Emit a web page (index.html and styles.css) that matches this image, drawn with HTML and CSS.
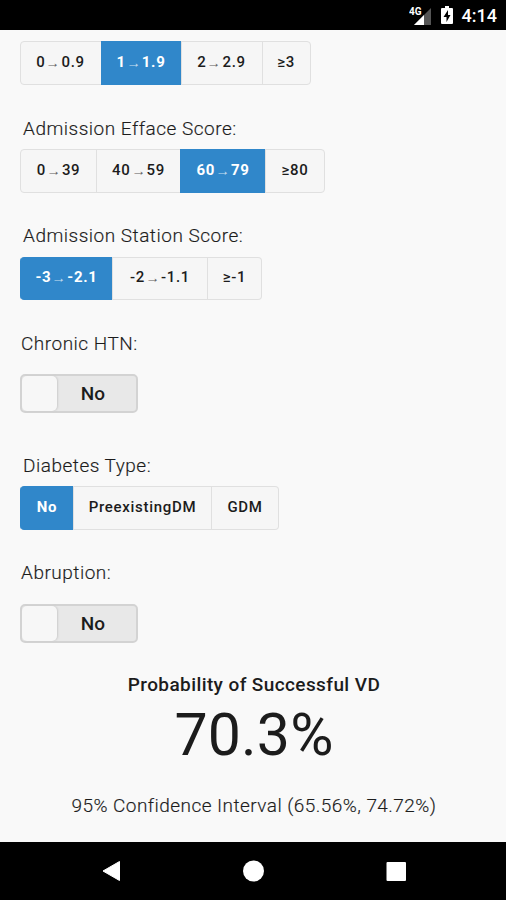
FILE: index.html
```html
<!DOCTYPE html>
<html lang="en"><head><meta charset="utf-8"><title>VD Calculator</title><link rel="stylesheet" href="styles.css"></head>
<body>
<header class="status">
<svg class="signal" width="24" height="22" viewBox="0 0 24 22"><path d="M22 3v17H5z" fill="#555"/><path d="M15 10v10H5z" fill="#fff"/><text x="0" y="10" class="net">4G</text></svg>
<svg class="battery" width="12" height="18" viewBox="0 0 12 18"><path d="M4 0h4v2h3q1 0 1 1v14q0 1-1 1H1q-1 0-1-1V3q0-1 1-1h3z" fill="#fff"/><path d="M7 4 2.500 11H5.500V16L9.500 9H7z" fill="#000"/></svg>
<span class="clock">4:14</span>
</header>
<main>
<div class="group g1"><span class="w80">0<i>→</i>0.9</span><span class="w80 on">1<i>→</i>1.9</span><span class="w81">2<i>→</i>2.9</span><span class="w49">≥3</span></div>
<h2 class="l1"><b>Admission Efface Score:</b></h2>
<div class="group"><span class="w75">0<i>→</i>39</span><span class="w84">40<i>→</i>59</span><span class="w85 on">60<i>→</i>79</span><span class="w60">≥80</span></div>
<h2 class="l2"><b>Admission Station Score:</b></h2>
<div class="group short"><span class="w92 on">-3<i>→</i>-2.1</span><span class="w94">-2<i>→</i>-1.1</span><span class="w55">≥-1</span></div>
<h2 class="l3"><b>Chronic HTN:</b></h2>
<div class="switch"><div class="knob"></div><span>No</span></div>
<h2 class="l4"><b>Diabetes Type:</b></h2>
<div class="group"><span class="w52 on">No</span><span class="w138">PreexistingDM</span><span class="w68">GDM</span></div>
<h2 class="l5"><b>Abruption:</b></h2>
<div class="switch"><div class="knob"></div><span>No</span></div>
<section class="result"><h3>Probability of Successful VD</h3><div class="value">70.3%</div><p>95% Confidence Interval (65.56%, 74.72%)</p></section>
</main>
<nav><svg width="506" height="58" viewBox="0 0 506 58"><path d="M119.500 19.500v19L103 29z" fill="#fff" stroke="#fff" stroke-linejoin="round"/><circle cx="253.500" cy="29" r="10.500" fill="#fff"/><rect x="386.500" y="20" width="19.500" height="19" rx="1" fill="#fff"/></svg></nav>
</body></html>
```
FILE: styles.css
```css
*{box-sizing:border-box}
body{margin:0;width:506px;height:900px;overflow:hidden;background:#f9f9f9;color:#1c1c1c;font-family:Roboto,sans-serif;display:flex;flex-direction:column}
.status{height:30px;background:#000;color:#fff;display:flex;justify-content:flex-end;align-items:center;padding-right:9px;flex:none}
.net{font:bold 10px Roboto,sans-serif;fill:#fff}
.signal{margin:2px 8px 0 0}
.battery{margin-right:9px}
.clock{font-size:18px;font-weight:500;line-height:32px;padding-top:1px}
main{flex:1;padding-left:20px;min-height:0}
.group{display:flex;width:max-content;height:44px;border:1px solid #e0e0e0;border-radius:4px;background:#f6f6f6}
.g1{margin-top:11px}
.group.short{height:43px}
.group span{display:flex;align-items:center;justify-content:center;font-size:15px;font-weight:500;letter-spacing:.7px;padding:0 0 3px;border-left:1px solid #e0e0e0}
.group span:first-child{border-left:0;border-radius:3px 0 0 3px}
.group .on{background:#3087ca;color:#fff;font-weight:700;border-color:#3087ca;box-shadow:0 -1px #3087ca,0 1px #3087ca}
.group:has(.on:first-child){border-left-color:#3087ca}
i{font-style:normal;font-size:12px;letter-spacing:0;width:16px;text-align:center;opacity:.75;transform:translateY(1px) scaleX(1.2)}
.w80{width:80px}.w81{width:81px}.w49{width:48px}.w75{width:75px}.w84{width:84px}.w85{width:85px}.w60{width:59px}.w92{width:91px}.w94{width:95px}.w55{width:54px}.w52{width:52px}.w138{width:138px}.w68{width:67px}
.g1 span{padding-right:1px}
h2{margin:0;font-size:19px;font-weight:300;line-height:24px;padding-left:3px;white-space:nowrap}
h2 b{font-weight:300;letter-spacing:.5px;-webkit-text-stroke:.15px #222}
.l1{height:64px;padding-top:32px}
.l2{height:64px;padding-top:31px}
.l3{height:74px;padding:32px 0 0 1px}
.l4{height:73px;padding-top:41px}
.l5{height:74px;padding:31px 0 0 1px}
.switch{width:118px;height:39px;border:2px solid #d3d3d3;border-radius:5px;background:#e8e8e8;display:flex}
.knob{width:35px;height:35px;background:#f7f7f7;border-radius:5px;box-shadow:1px 0 2px #ccc}
.switch span{width:72px;text-align:center;font-size:19px;font-weight:500;line-height:35px}
.result{margin-left:-20px;text-align:center;padding-top:30px}
h3{margin:0;font-size:19px;font-weight:500;line-height:24px;letter-spacing:.4px;padding-left:2px}
.value{font-size:59px;font-weight:400;line-height:72px;margin-top:2px;letter-spacing:.2px;padding-left:2px}
p{font-size:19px;font-weight:300;line-height:24px;margin:23px 0 0;padding-left:2px;letter-spacing:.45px;-webkit-text-stroke:.15px #222}
nav{height:58px;background:#000;flex:none}
nav svg{display:block}
```
